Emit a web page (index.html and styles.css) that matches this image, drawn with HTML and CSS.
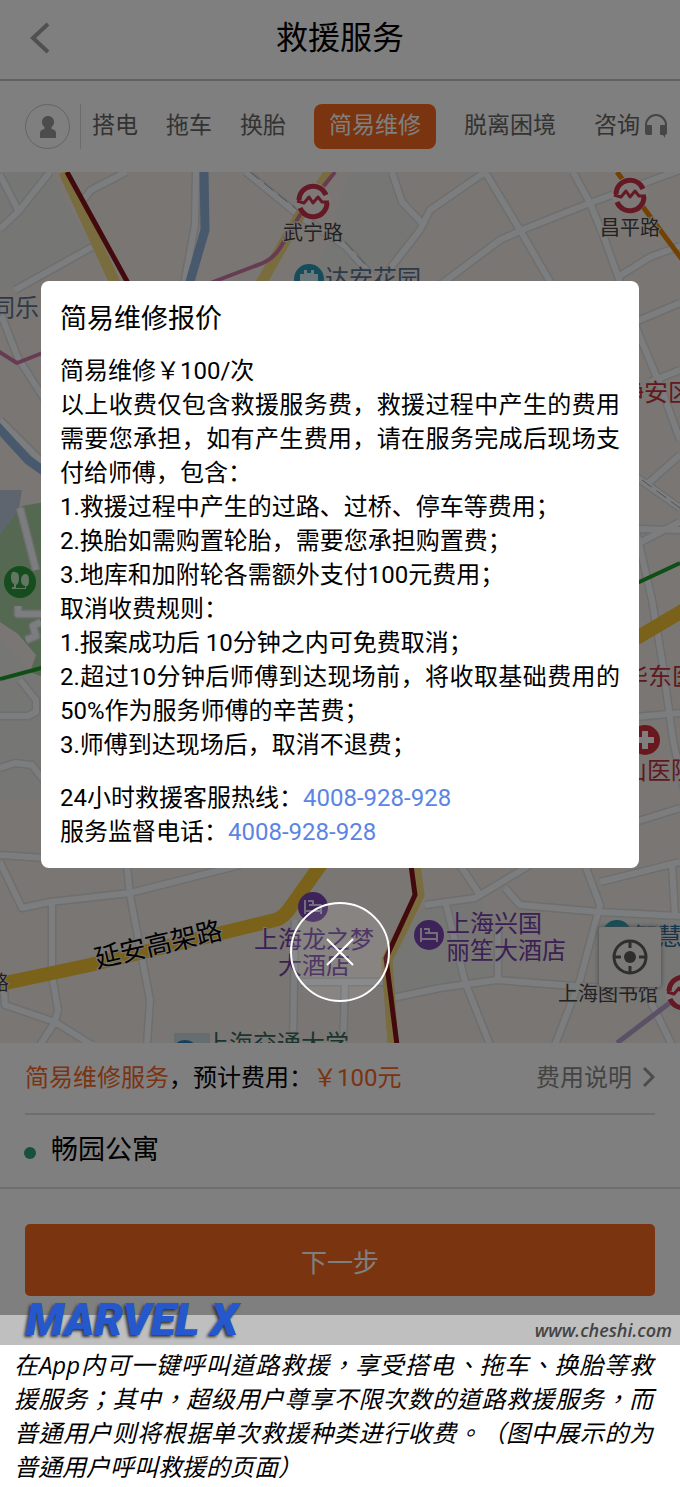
FILE: index.html
```html
<!DOCTYPE html>
<html lang="zh-CN">
<head>
    <meta charset="utf-8" />
    <meta name="viewport" content="width=device-width,initial-scale=1" />
    <title>救援服务</title>
    <link rel="stylesheet" href="styles.css">
</head>
<body>
    <div class="screen">
        <header class="header">
            <button class="back" aria-label="返回">
                <svg width="22" height="32" viewBox="0 0 22 32"><path d="M20 2 5 16l15 14" /></svg>
            </button>
            <h1>救援服务</h1>
        </header>

        <nav class="tabs">
            <button class="avatar" aria-label="我的">
                <svg width="18" height="22" viewBox="0 0 18 22"><path d="M9 0a6 6 0 0 1 4 10.500q-1 2 0 2.500 4 1 4 4v5H1v-5q0-3 4-4 1-.5 0-2.500A6 6 0 0 1 9 0z" /></svg>
            </button>
            <div class="tab-list">
                <button class="tab">搭电</button>
                <button class="tab">拖车</button>
                <button class="tab">换胎</button>
                <button class="tab active">简易维修</button>
                <button class="tab">脱离困境</button>
            </div>
            <button class="tab consult">咨询
                <svg width="24" height="24" viewBox="0 0 24 24">
                    <path class="band" d="M2 13V11a10 10 0 0 1 20 0v2" />
                    <path d="M3 11h4q1 0 1 1v8q0 1-1 1H3q-2 0-2-2v-6q0-2 2-2zM17 11h4q2 0 2 2v6q0 2-2 2v3l-2-3h-2q-1 0-1-1v-8q0-1 1-1z" />
                </svg>
            </button>
        </nav>

        <div class="map">
            <svg class="map-canvas" viewBox="0 172 680 871">
                <defs>
                    <g id="roads">
                        <path d="M50 172 18 212 0 229M0 175 18 210M126 172 91 190 80 204M92 247 15 290" />
                        <path d="M196 172 195 225 184 285M246 172 300 216 345 246 372 276" />
                        <path d="M392 172 402 202 425 226M485 172 430 210 420 230 385 275M485 172 520 230 552 285" />
                        <path d="M440 285 500 240 522 230 590 203 680 170M573 172 590 203 605 240 621 285M618 277 650 257 680 246" />
                        <path d="M0 312 18 358 45 400M0 420 45 465M20 508 36 570M18 606v8h23M41 622l-8 4 3 10-10 4M20 680 36 700 36 712 28 716H0" />
                        <path d="M0 768 15 763 32 765 45 782M0 855 45 858" />
                        <path d="M635 322 680 303M635 325 660 385 680 440M650 382 680 370M645 486 680 455M635 476 680 508M635 529 680 530M635 545 680 522" />
                        <path d="M636 530 652 600 662 660 673 740 684 790M635 717 680 713M635 822 680 808" />
                        <path d="M0 862 22 908 50 902 130 893 240 865M52 902 52 975 58 1010 55 1022 92 1045M55 1022 40 1045M55 1022 5 1005 4 990M127 865 130 895 150 1000 147 1045" />
                        <path d="M295 920 293 1045M345 985 343 1045M300 982h90" />
                        <path d="M425 905 475 898 530 865M460 865 480 895M505 888 520 905 600 912 680 916M585 865 600 905 580 980 555 1045M600 882 680 862M672 865 675 916" />
                        <path d="M445 900 465 982 490 1045M392 998 440 988 497 980 560 985 640 990M498 930 498 980M645 990 672 1045" />
                    </g>
                    <g id="metro">
                        <circle r="18" fill="#fbf2f2" />
                        <path d="M-14-1A14 14 0 0 1 13-6M-13 7A14 14 0 0 0 14 2" fill="none" stroke="#c8324b" stroke-width="5" />
                        <path d="M-16 0-9 2-4-4 0 2 5-4 9 1H16" fill="none" stroke="#c8324b" stroke-width="3" />
                    </g>
                    <g id="hotel">
                        <circle r="15" fill="#7d46b4" />
                        <path d="M-8-7V7M-8 4H8M8 7V-2H-4M-5-6H0V-1" fill="none" stroke="#e8dcf2" stroke-width="2" />
                    </g>
                </defs>

                <path class="land" d="M0 172h680v871H0z" />
                <path class="block" d="M50 172H0v120l92-45zM0 640l41 40v120H0zM425 905l55-10 18 85-106 18-8-36zM350 172h42l30 54-60 60h-50zM600 912l80 4v100l-90-30z" />
                <path class="lake" d="M0 490H22L18 514 0 534z" />
                <path class="park" d="M0 534 22 506 45 502V678L30 672 36 655 18 634 0 622z" />

                <use href="#roads" class="road-edge" />
                <use href="#roads" class="road" />
                <path class="rail" d="M250 172 300 212M345 242 372 272M642 480 680 508" />
                <path class="water" d="M204 170 205 230 189 285M-4 425 28 460 45 472" />

                <path class="highway pale" d="M64 172 116 285M330 172 300 215 260 285M415 865 419 895 387 960 393 1045" />
                <path class="highway" d="M-4 985 90 965 275 920Q284 918 292 905L324 860M635 639 684 610" />
                <path class="line-red" d="M67 172 129 285M411 865 415 895 386 958 397 1045" />
                <path class="line-pink" d="M335 172 300 215 280 248Q272 261 255 266L205 285M-4 350 17 363 45 352" />
                <path class="line-green" d="M0 679 45 667M635 584 680 563" />
                <path class="line-orange" d="M617 172 684 262" />
                <path class="line-lilac" d="M617 1043 680 995" />

                <use href="#metro" x="313" y="201" />
                <use href="#metro" x="630" y="195" />
                <use href="#metro" x="683" y="992" />
                <use href="#hotel" x="313" y="907" />
                <use href="#hotel" x="429" y="935" />

                <circle cx="309" cy="279" r="15" fill="#2c9ab4" />
                <path d="M300 284V274h4v-4h3v3h4v-3h3v4h4v10z" fill="#d8eef2" />
                <circle cx="617" cy="935" r="15" fill="#2c9ab4" />
                <path d="M174 1033h36v12h-36z" fill="#c8dce2" />
                <circle cx="185" cy="1054" r="14" fill="#2c7ab4" />
                <circle cx="20" cy="582" r="16" fill="#2a9a3c" />
                <path d="M15 572q4 0 4 6t-3 7v3h9v-2q-4-1-4-6t4-6 4 6-3 6v3H12v-2h2v-3q-3-1-3-7t4-5z" fill="#c4ecc4" />
                <circle cx="645" cy="740" r="15" fill="#d2323c" />
                <path d="M645 731v18M636 740h18" stroke="#fff" stroke-width="6" />

                <g class="labels">
                    <text class="station" x="283" y="240">武宁路</text>
                    <text class="station" x="600" y="235">昌平路</text>
                    <text class="station" x="558" y="1001">上海图书馆</text>
                    <text class="station" x="-11" y="990">路</text>
                    <text class="estate" x="325" y="287">达安花园</text>
                    <text class="estate" x="-9" y="316">同乐</text>
                    <text class="red" x="620" y="401">静安区</text>
                    <text class="red" x="624" y="685">华东医</text>
                    <text class="red" x="623" y="779">山医院</text>
                    <text class="purple" x="254" y="948">上海龙之梦</text>
                    <text class="purple" x="278" y="974">大酒店</text>
                    <text class="purple" x="446" y="932">上海兴国</text>
                    <text class="purple" x="446" y="959">丽笙大酒店</text>
                    <text class="school" x="205" y="1052">上海交通大学</text>
                    <text class="blue" x="634" y="945">智慧</text>
                    <text class="road-name" transform="translate(97 968) rotate(-13)">延安高架路</text>
                </g>
            </svg>
            <button class="locate" aria-label="定位">
                <svg width="38" height="38" viewBox="0 0 38 38">
                    <circle cx="19" cy="19" r="16" />
                    <path d="M19 2v8M19 28v8M2 19h8M28 19h8" />
                    <circle class="dot" cx="19" cy="19" r="6" />
                </svg>
            </button>
        </div>

        <section class="order">
            <div class="cost">
                <p><em>简易维修服务</em>，预计费用：<em>￥100元</em></p>
                <a href="#fee">费用说明
                    <svg width="13" height="22" viewBox="0 0 13 22"><path d="M2 2l9 9-9 9" /></svg>
                </a>
            </div>
            <div class="place">畅园公寓</div>
        </section>
        <div class="actions">
            <button class="next">下一步</button>
        </div>

        <div class="mask">
            <div class="dialog" role="dialog" aria-labelledby="dialog-title">
                <h2 id="dialog-title">简易维修报价</h2>
                <div class="rules">
                    <p>简易维修￥100/次</p>
                    <p>以上收费仅包含救援服务费，救援过程中产生的费用需要您承担，如有产生费用，请在服务完成后现场支付给师傅，包含：</p>
                    <p>1.救援过程中产生的过路、过桥、停车等费用；</p>
                    <p>2.换胎如需购置轮胎，需要您承担购置费；</p>
                    <p>3.地库和加附轮各需额外支付100元费用；</p>
                    <p>取消收费规则：</p>
                    <p>1.报案成功后 10分钟之内可免费取消；</p>
                    <p>2.超过10分钟后师傅到达现场前，将收取基础费用的50%作为服务师傅的辛苦费；</p>
                    <p>3.师傅到达现场后，取消不退费；</p>
                </div>
                <div class="contact">
                    <p>24小时救援客服热线：<a href="tel:4008928928">4008-928-928</a></p>
                    <p>服务监督电话：<a href="tel:4008928928">4008-928-928</a></p>
                </div>
            </div>
            <button class="close" aria-label="关闭">
                <svg width="28" height="28" viewBox="0 0 28 28"><path d="M1 1l26 26M27 1 1 27" /></svg>
            </button>
        </div>
    </div>

    <div class="brand-bar">
        <strong>MARVEL X</strong>
        <span>www.cheshi.com</span>
    </div>
    <p class="caption">在App内可一键呼叫道路救援，享受搭电、拖车、换胎等救援服务；其中，超级用户尊享不限次数的道路救援服务，而普通用户则将根据单次救援种类进行收费。（图中展示的为普通用户呼叫救援的页面）</p>
</body>
</html>
```
FILE: styles.css
```css
* {
    box-sizing: border-box;
}

body {
    margin: 0;
    background: #fff;
    color: #000;
    font-family: Roboto, "Noto Sans CJK SC", sans-serif;
    font-size: 24px;
}

h1, h2, p {
    margin: 0;
    font-weight: 400;
}

button {
    padding: 0;
    border: 0;
    background: none;
    color: inherit;
    font: inherit;
    cursor: pointer;
}

a {
    text-decoration: none;
}

svg {
    display: block;
    fill: none;
}

.screen {
    position: relative;
    background: #fff;
}

/* 顶部 */
.header {
    display: grid;
    grid-template-columns: 80px 1fr 80px;
    align-items: center;
    height: 81px;
    padding-bottom: 3px;
    border-bottom: 2px solid #c4c4c4;
}

.header h1 {
    font-size: 32px;
    line-height: 40px;
    text-align: center;
}

.back {
    display: flex;
    padding-left: 28px;
}

.back path {
    stroke: #a0a0a0;
    stroke-width: 4;
}

.tabs {
    display: flex;
    align-items: center;
    height: 91px;
    padding: 0 12px 0 25px;
    color: #666;
    font-size: 23px;
    white-space: nowrap;
}

.avatar {
    display: flex;
    align-items: center;
    justify-content: center;
    width: 45px;
    height: 45px;
    border: 1px solid #c8c8c8;
    border-radius: 50%;
}

.avatar path {
    fill: #999;
}

.tab-list {
    display: flex;
    gap: 28px;
    margin-left: 10px;
    padding-left: 11px;
    border-left: 1px solid #d8d8d8;
}

.tab {
    height: 45px;
    padding-bottom: 8px;
}

.tab.active {
    padding: 0 15px 8px;
    border-radius: 8px;
    background: #f4681f;
    color: #fff;
}

.consult {
    display: flex;
    align-items: center;
    gap: 4px;
    margin-left: auto;
}

.consult svg {
    margin-top: 6px;
    fill: #8c8c8c;
}

.consult .band {
    fill: none;
    stroke: #8c8c8c;
    stroke-width: 2;
}

/* 地图 */
.map {
    position: relative;
    overflow: hidden;
}

.map-canvas {
    width: 100%;
    height: auto;
}

.map-canvas path {
    stroke-linejoin: round;
}

.land {
    fill: #f4ede8;
}

.block {
    fill: #ededea;
}

.lake {
    fill: #bccbdc;
}

.park {
    fill: #a8d0a4;
}

.road-edge {
    stroke: #dcdcdc;
    stroke-width: 9;
}

.road {
    stroke: #f8fafc;
    stroke-width: 6;
}

.rail {
    stroke: #a0a4ac;
    stroke-width: 1;
    stroke-dasharray: 12 6;
}

.water {
    stroke: #92b2da;
    stroke-width: 9;
}

.highway {
    stroke: #f4c436;
    stroke-width: 14;
}

.highway.pale {
    stroke: #f2d87c;
    stroke-width: 11;
}

.line-red {
    stroke: #86141c;
    stroke-width: 5;
}

.line-pink {
    stroke: #cf78a4;
    stroke-width: 4;
}

.line-green {
    stroke: #1f9c2c;
    stroke-width: 4;
}

.line-orange {
    stroke: #e88400;
    stroke-width: 5;
}

.line-lilac {
    stroke: #b4a2cc;
    stroke-width: 5;
}

.labels {
    font-size: 24px;
}

.labels text {
    paint-order: stroke;
    stroke: #f4ede8;
    stroke-width: 2px;
}

.labels .station {
    fill: #444;
    font-size: 20px;
}

.labels .estate {
    fill: #587494;
}

.labels .red {
    fill: #bc3440;
}

.labels .purple {
    fill: #7440a8;
}

.labels .school {
    fill: #34685e;
}

.labels .blue {
    fill: #2c6c94;
}

.labels .road-name {
    fill: #000;
    font-size: 26px;
}

.locate {
    position: absolute;
    right: 19px;
    bottom: 56px;
    display: flex;
    align-items: center;
    justify-content: center;
    width: 62px;
    height: 60px;
    border-radius: 3px;
    background: #f4f2f0;
    box-shadow: 0 0 5px #888;
}

.locate svg {
    stroke: #5c5c5c;
    stroke-width: 3;
}

.locate .dot {
    fill: #5c5c5c;
    stroke: none;
}

/* 订单信息 */
.order {
    border-bottom: 2px solid #dcdcdc;
}

.cost {
    display: flex;
    align-items: center;
    justify-content: space-between;
    height: 72px;
    margin: 0 25px;
    padding-bottom: 6px;
    border-bottom: 2px solid #dcdcdc;
}

.cost em {
    color: #f4681f;
    font-style: normal;
}

.cost a {
    display: flex;
    align-items: center;
    gap: 10px;
    color: #888;
}

.cost svg {
    margin-top: 4px;
    stroke: #999;
    stroke-width: 3;
}

.place {
    display: flex;
    align-items: center;
    gap: 15px;
    height: 72px;
    padding: 0 24px 8px;
    font-size: 27px;
}

.place::before {
    content: "";
    width: 12px;
    height: 12px;
    margin-top: 12px;
    border-radius: 50%;
    background: #2fa078;
}

.actions {
    padding: 35px 25px 19px;
}

.next {
    display: block;
    width: 100%;
    height: 72px;
    border-radius: 5px;
    background: #f4681f;
    color: #fff;
    font-size: 26px;
}

/* 报价弹窗 */
.mask {
    position: absolute;
    inset: 0;
    padding: 281px 41px 0;
    background: rgba(0, 0, 0, 0.5);
}

.dialog {
    padding: 19px;
    border-radius: 8px;
    background: #fff;
    line-height: 34px;
}

.dialog h2 {
    margin-bottom: 16px;
    font-size: 27px;
    line-height: 38px;
}

.rules {
    margin-bottom: 19px;
    text-align: justify;
}

.contact a {
    color: #5b84e4;
}

.close {
    display: flex;
    align-items: center;
    justify-content: center;
    width: 100px;
    height: 100px;
    margin: 34px auto 0;
    border: 2px solid #fff;
    border-radius: 50%;
    background: rgba(255, 255, 255, 0.1);
}

.close svg {
    stroke: #fff;
    stroke-width: 2;
}

/* 底部说明 */
.brand-bar {
    position: relative;
    display: flex;
    justify-content: space-between;
    height: 30px;
    padding: 0 8px 0 26px;
    background: #bfbfbf;
    font-style: italic;
    line-height: 30px;
}

.brand-bar strong {
    margin-top: -10px;
    color: #2458cc;
    font-size: 45px;
    font-weight: 900;
    text-shadow: -2px 2px 3px #333;
}

.brand-bar span {
    color: #444;
    font-family: "Open Sans", sans-serif;
    font-size: 18px;
    font-weight: 600;
}

/* 标点居中 */
.caption {
    -webkit-locale: "zh-Hant";
    padding: 3px 27px 3px 14px;
    font-family: "Open Sans", "Noto Sans CJK TC", sans-serif;
    font-size: 24px;
    font-style: italic;
    line-height: 34px;
    text-align: justify;
    text-spacing-trim: space-all;
}
```
